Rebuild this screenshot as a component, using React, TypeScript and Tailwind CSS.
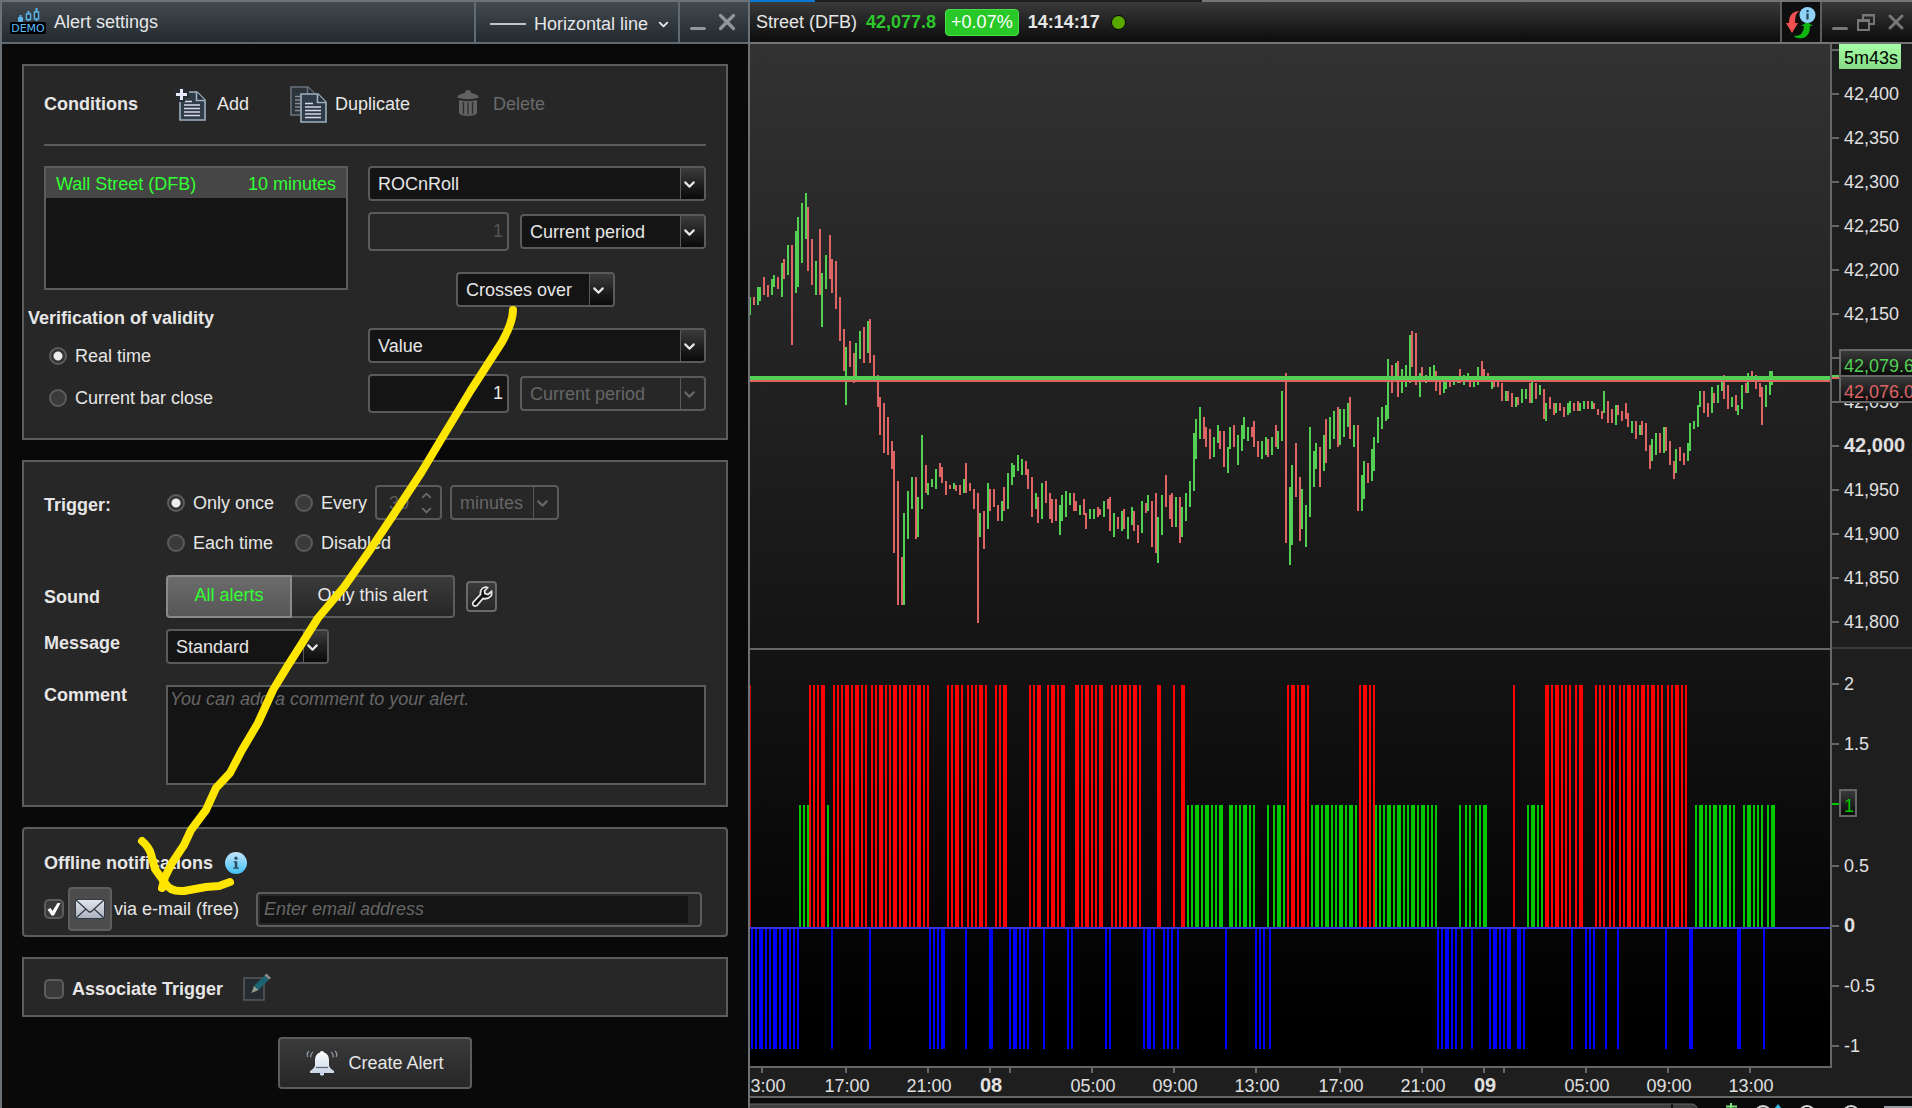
import type { ReactNode } from 'react';
import { ChevronDown, ChevronUp, X } from 'lucide-react';

// x, high, low, up (1) or down (0)
const candles = [
  [750, 297, 315, 1], [754, 297, 305, 0], [758, 287, 305, 1], [760, 287, 301, 1], [764, 277, 295, 0],
  [768, 285, 297, 0], [772, 279, 295, 1], [774, 275, 287, 1], [778, 277, 289, 0], [782, 263, 297, 1],
  [784, 259, 279, 0], [788, 245, 275, 1], [792, 245, 345, 0], [796, 231, 293, 1], [798, 217, 287, 1],
  [802, 203, 263, 1], [806, 193, 239, 1], [808, 207, 271, 0], [812, 239, 285, 0], [816, 261, 295, 1],
  [820, 229, 295, 0], [822, 273, 327, 1], [826, 255, 289, 1], [830, 235, 279, 0], [832, 259, 293, 0],
  [836, 261, 309, 0], [840, 297, 341, 0], [844, 329, 371, 0], [846, 347, 405, 1], [850, 341, 367, 0],
  [854, 353, 383, 0], [856, 343, 380, 1], [860, 331, 359, 1], [864, 327, 363, 0], [868, 321, 353, 1],
  [870, 319, 363, 0], [874, 355, 380, 0], [878, 375, 407, 0], [880, 397, 435, 0], [884, 403, 453, 0],
  [888, 417, 455, 0], [892, 441, 469, 0], [894, 451, 553, 0], [898, 481, 605, 0], [902, 557, 605, 0],
  [904, 513, 605, 1], [908, 491, 539, 1], [912, 477, 509, 1], [916, 477, 539, 0], [918, 497, 537, 1],
  [922, 435, 509, 1], [926, 465, 493, 0], [928, 483, 495, 1], [932, 479, 487, 1], [936, 469, 489, 1],
  [940, 463, 477, 0], [942, 467, 483, 0], [946, 481, 495, 0], [950, 485, 489, 0], [954, 483, 489, 1],
  [956, 485, 491, 0], [960, 485, 495, 0], [964, 479, 493, 1], [966, 463, 493, 0], [970, 483, 491, 0],
  [974, 489, 509, 0], [978, 493, 623, 0], [980, 513, 537, 1], [984, 511, 549, 0], [988, 483, 529, 1],
  [990, 489, 511, 0], [994, 489, 507, 0], [998, 505, 521, 0], [1002, 501, 521, 1], [1004, 487, 511, 0],
  [1008, 473, 509, 1], [1012, 463, 485, 1], [1014, 465, 477, 1], [1018, 455, 471, 1], [1022, 459, 475, 1],
  [1026, 461, 475, 0], [1028, 469, 489, 0], [1032, 477, 517, 0], [1036, 493, 509, 1], [1038, 497, 523, 0],
  [1042, 483, 519, 1], [1046, 481, 503, 0], [1050, 493, 519, 0], [1052, 499, 523, 0], [1056, 499, 521, 0],
  [1060, 505, 535, 1], [1062, 495, 521, 1], [1066, 491, 517, 1], [1070, 493, 505, 1], [1074, 493, 511, 0],
  [1076, 501, 511, 0], [1080, 505, 515, 1], [1084, 499, 515, 0], [1086, 513, 529, 0], [1090, 509, 519, 1],
  [1094, 509, 519, 1], [1098, 507, 517, 0], [1100, 509, 515, 0], [1104, 501, 517, 1], [1108, 499, 509, 0],
  [1110, 497, 531, 0], [1114, 513, 537, 1], [1118, 517, 529, 0], [1122, 511, 531, 1], [1124, 509, 529, 0],
  [1128, 517, 539, 1], [1132, 507, 525, 1], [1134, 511, 531, 0], [1138, 525, 543, 0], [1142, 501, 533, 1],
  [1146, 503, 513, 0], [1148, 495, 511, 1], [1152, 501, 547, 0], [1156, 493, 553, 0], [1158, 517, 563, 1],
  [1162, 495, 535, 1], [1166, 475, 507, 0], [1170, 495, 519, 0], [1172, 493, 527, 0], [1176, 497, 527, 1],
  [1180, 497, 543, 0], [1182, 507, 537, 1], [1186, 493, 521, 1], [1190, 481, 507, 1], [1194, 433, 491, 1],
  [1196, 419, 459, 1], [1200, 407, 439, 1], [1204, 417, 439, 0], [1206, 427, 447, 0], [1210, 429, 459, 0],
  [1214, 437, 457, 1], [1218, 425, 443, 1], [1220, 431, 449, 0], [1224, 431, 467, 0], [1228, 447, 473, 1],
  [1230, 427, 449, 1], [1234, 425, 447, 0], [1238, 435, 465, 1], [1242, 425, 451, 1], [1244, 417, 439, 1],
  [1248, 427, 441, 1], [1252, 427, 437, 0], [1254, 421, 447, 0], [1258, 441, 457, 0], [1262, 441, 459, 1],
  [1266, 437, 455, 1], [1268, 439, 457, 0], [1272, 437, 455, 1], [1276, 425, 447, 0], [1278, 431, 449, 1],
  [1282, 391, 441, 1], [1286, 373, 543, 0], [1290, 487, 565, 1], [1292, 465, 545, 1], [1296, 443, 497, 0],
  [1300, 477, 541, 0], [1302, 489, 529, 1], [1306, 505, 547, 1], [1310, 427, 517, 1], [1314, 451, 487, 1],
  [1316, 443, 469, 1], [1320, 447, 487, 0], [1324, 435, 471, 1], [1326, 419, 463, 0], [1330, 417, 449, 1],
  [1334, 411, 439, 1], [1338, 407, 447, 0], [1340, 409, 445, 1], [1344, 409, 437, 1], [1348, 403, 427, 1],
  [1350, 397, 439, 0], [1354, 425, 447, 1], [1358, 425, 511, 0], [1362, 475, 511, 1], [1364, 461, 499, 1],
  [1368, 463, 483, 0], [1372, 449, 481, 1], [1374, 437, 471, 1], [1378, 417, 443, 1], [1382, 407, 429, 1],
  [1386, 405, 421, 1], [1388, 359, 419, 1], [1392, 365, 393, 0], [1396, 363, 377, 1], [1398, 361, 397, 0],
  [1402, 369, 393, 1], [1406, 365, 387, 1], [1410, 335, 383, 1], [1412, 331, 367, 0], [1416, 333, 385, 0],
  [1420, 373, 397, 1], [1422, 367, 381, 0], [1426, 375, 383, 1], [1430, 367, 378, 1], [1434, 365, 378, 1],
  [1436, 371, 391, 0], [1440, 380, 395, 0], [1444, 381, 393, 1], [1446, 381, 389, 1], [1450, 381, 387, 0],
  [1454, 380, 385, 1], [1458, 380, 383, 1], [1460, 369, 383, 0], [1464, 375, 385, 1], [1468, 373, 378, 1],
  [1470, 380, 387, 0], [1474, 380, 387, 1], [1478, 367, 385, 1], [1482, 361, 378, 0], [1484, 369, 382, 0],
  [1488, 373, 382, 0], [1492, 380, 389, 1], [1494, 380, 387, 0], [1498, 380, 387, 0], [1502, 383, 401, 0],
  [1506, 391, 401, 1], [1508, 391, 401, 0], [1512, 393, 407, 0], [1516, 397, 407, 1], [1518, 397, 405, 0],
  [1522, 389, 403, 1], [1526, 389, 399, 1], [1530, 383, 403, 0], [1532, 381, 403, 1], [1536, 383, 399, 0],
  [1540, 385, 395, 1], [1544, 389, 419, 0], [1546, 403, 421, 1], [1550, 397, 409, 0], [1554, 403, 415, 0],
  [1556, 403, 413, 1], [1560, 403, 411, 0], [1564, 407, 417, 0], [1568, 403, 415, 1], [1570, 401, 413, 1],
  [1574, 403, 411, 0], [1578, 401, 411, 0], [1580, 403, 411, 1], [1584, 401, 409, 1], [1588, 401, 409, 0],
  [1592, 401, 409, 1], [1594, 403, 409, 0], [1598, 409, 415, 0], [1602, 411, 419, 0], [1604, 391, 413, 1],
  [1608, 401, 423, 0], [1612, 409, 423, 0], [1616, 405, 425, 1], [1618, 405, 415, 0], [1622, 411, 421, 0],
  [1626, 403, 419, 0], [1628, 413, 427, 0], [1632, 421, 433, 1], [1636, 421, 439, 0], [1640, 425, 435, 1],
  [1642, 421, 435, 0], [1646, 423, 451, 0], [1650, 445, 469, 0], [1652, 439, 461, 1], [1656, 433, 455, 1],
  [1660, 433, 453, 0], [1664, 427, 453, 1], [1666, 427, 451, 0], [1670, 441, 465, 0], [1674, 461, 479, 0],
  [1676, 449, 473, 1], [1680, 447, 461, 0], [1684, 453, 465, 0], [1688, 443, 461, 1], [1690, 423, 451, 1],
  [1694, 421, 429, 1], [1698, 405, 427, 1], [1700, 391, 407, 1], [1704, 391, 413, 0], [1708, 403, 417, 0],
  [1712, 387, 413, 1], [1714, 393, 403, 0], [1718, 385, 403, 1], [1722, 381, 391, 1], [1724, 375, 399, 0],
  [1728, 385, 409, 0], [1732, 397, 407, 1], [1736, 395, 411, 0], [1738, 405, 415, 1], [1742, 385, 409, 1],
  [1746, 383, 393, 0], [1748, 373, 393, 1], [1752, 371, 378, 0], [1756, 375, 389, 0], [1760, 383, 397, 0],
  [1762, 387, 425, 0], [1766, 385, 407, 1], [1770, 371, 395, 1], [1772, 371, 385, 1],
];

// indicator value from each x onwards
const signalRuns = [
  [752, -1], [800, 1], [810, 2], [828, 1], [832, -1], [834, 2], [870, -1], [872, 2], [930, -1], [948, 2],
  [966, -1], [968, 2], [990, -1], [996, 2], [1010, -1], [1030, 2], [1044, -1], [1048, 2], [1068, -1], [1076, 2],
  [1106, -1], [1112, 2], [1144, -1], [1158, 2], [1164, -1], [1174, 2], [1178, -1], [1182, 2], [1188, 1], [1226, -1],
  [1230, 1], [1256, -1], [1268, 1], [1270, -1], [1274, 1], [1288, 2], [1312, 1], [1360, 2], [1376, 1], [1438, -1],
  [1460, 1], [1462, -1], [1466, 1], [1472, -1], [1476, 1], [1490, -1], [1514, 2], [1518, -1], [1528, 1], [1546, 2],
  [1572, -1], [1576, 2], [1586, -1], [1596, 2], [1606, -1], [1610, 2], [1618, -1], [1620, 2], [1666, -1], [1668, 2],
  [1690, -1], [1696, 1], [1738, -1], [1744, 1], [1764, -1], [1768, 1],
];

const signalAt = (x: number) => {
  let value = 2;
  for (const [start, v] of signalRuns) {
    if (start <= x) value = v;
  }
  return value;
};

const signalBars = candles.map(([x]) => ({ x: x + 2, value: signalAt(x + 2) }));
const candlePath = (up: number) =>
  candles.filter((c) => c[3] === up).map(([x, high, low]) => `M${x} ${high}V${low}`).join('');
const signalPath = (value: number, y: number) =>
  signalBars.filter((b) => b.value === value).map((b) => `M${b.x} 928V${y}`).join('');

const priceTicks = [
  { y: 94, label: '42,400' },
  { y: 138, label: '42,350' },
  { y: 182, label: '42,300' },
  { y: 226, label: '42,250' },
  { y: 270, label: '42,200' },
  { y: 314, label: '42,150' },
  { y: 402, label: '42,050' },
  { y: 446, label: '42,000', bold: true },
  { y: 490, label: '41,950' },
  { y: 534, label: '41,900' },
  { y: 578, label: '41,850' },
  { y: 622, label: '41,800' },
  { y: 684, label: '2' },
  { y: 744, label: '1.5' },
  { y: 866, label: '0.5' },
  { y: 926, label: '0', bold: true },
  { y: 986, label: '-0.5' },
  { y: 1046, label: '-1' },
];

const timeTicks = [
  { x: 762, label: '13:00' },
  { x: 846, label: '17:00' },
  { x: 928, label: '21:00' },
  { x: 990, label: '08', bold: true },
  { x: 1010, label: '' },
  { x: 1092, label: '05:00' },
  { x: 1174, label: '09:00' },
  { x: 1256, label: '13:00' },
  { x: 1340, label: '17:00' },
  { x: 1422, label: '21:00' },
  { x: 1484, label: '09', bold: true },
  { x: 1504, label: '' },
  { x: 1586, label: '05:00' },
  { x: 1668, label: '09:00' },
  { x: 1750, label: '13:00' },
];

function Select({ label, value, className, disabled }: { label: string; value: string; className: string; disabled?: boolean }) {
  return (
    <div
      className={`relative h-[35px] overflow-hidden rounded border-2 border-[#5a5a5a] ${disabled ? 'bg-[#272727] text-[#666]' : 'bg-[#141414] text-[#e6e6e6]'} ${className}`}
    >
      <select aria-label={label} disabled={disabled} className="h-full w-full appearance-none bg-transparent pl-2 pr-7 opacity-100 outline-none">
        <option>{value}</option>
      </select>
      <span
        className={`pointer-events-none absolute inset-y-0 right-0 flex w-6 items-center border-l border-[#5a5a5a] pt-0.5 ${disabled ? '' : 'bg-gradient-to-b from-[#3c3c3c] to-[#0a0a0a]'}`}
      >
        <ChevronDown size={17} strokeWidth={3} />
      </span>
    </div>
  );
}

function Radio({ name, label, checked }: { name: string; label: string; checked?: boolean }) {
  return (
    <label className="flex h-5 items-center gap-2 whitespace-nowrap pl-px">
      <input
        type="radio"
        name={name}
        defaultChecked={checked}
        className="h-[18px] w-[18px] appearance-none rounded-full border-2 border-[#5c5c5c] bg-[#3a3a3a] checked:bg-[radial-gradient(circle,#ececec_4px,#333_5px)]"
      />
      {label}
    </label>
  );
}

function Checkbox({ id, checked, label }: { id: string; checked?: boolean; label: string }) {
  return (
    <span className="relative flex h-5 w-5 shrink-0">
      <input
        id={id}
        type="checkbox"
        aria-label={label}
        defaultChecked={checked}
        className="h-5 w-5 appearance-none rounded-[5px] border-2 border-[#5c5c5c] bg-[#3a3a3a]"
      />
      {checked && (
        <svg className="pointer-events-none absolute inset-0" width="20" height="20" viewBox="0 0 20 20">
          <path d="M3.500 10.500l3-1.500 2 3L13.500 4h3L10 16.500H7.500z" fill="#fff" />
        </svg>
      )}
    </span>
  );
}

function Card({ className, children }: { className: string; children: ReactNode }) {
  return <section className={`border-2 border-[#5c5c5c] bg-[#272727] px-5 ${className}`}>{children}</section>;
}

function Page({ x, y, dim }: { x: number; y: number; dim?: boolean }) {
  return (
    <g transform={`translate(${x} ${y})`} opacity={dim ? 0.55 : 1}>
      <path d="M1 1H18L26 9V29H1z" fill="#2f3c48" stroke="#9fb0c0" strokeWidth="1.600" />
      <path d="M17.500 1V9.500H26" fill="#25303a" stroke="#9fb0c0" strokeWidth="1.600" />
      <path d="M5 10.500h8M5 14h16M5 17.500h16M5 21h16M5 24.500h16" stroke="#d6d6ea" strokeWidth="1.700" />
    </g>
  );
}

function InfoIcon() {
  return (
    <svg width="22" height="22" viewBox="0 0 22 22">
      <defs>
        <linearGradient id="info" x1="0" y1="0" x2="0" y2="1">
          <stop offset="0" stopColor="#c3e6fb" />
          <stop offset="1" stopColor="#3fc0f4" />
        </linearGradient>
      </defs>
      <circle cx="11" cy="11" r="11" fill="url(#info)" />
      <circle cx="11" cy="6.200" r="1.600" fill="#2c4a5e" />
      <path d="M8.500 9.200h3.800v6.300h1.500v1.300H8.300v-1.300h1.500v-5H8.500z" fill="#2c4a5e" />
    </svg>
  );
}

function AlertPanel() {
  return (
    <div className="relative flex min-w-0 flex-col border-x-2 border-t-2 border-[#6c7176] bg-[#090909]">
      <header className="flex h-[42px] border-b-2 border-[#5f6a73] bg-gradient-to-b from-[#424a50] to-[#232a30]">
        <div className="flex flex-1 items-center gap-2 pl-2">
          <svg width="36" height="28" viewBox="0 0 36 28">
            <rect x="0" y="14" width="36" height="12" rx="2" fill="#000" />
            <g stroke="#5ab4ea" fill="none">
              <path d="M10.500 7v3M18.500 3v4M18.500 11v2M26.500 0v4M26.500 11v2" strokeWidth="2" />
              <path d="M8.500 9.500h4v4h-4z" fill="#5ab4ea" strokeWidth="1" />
              <rect x="16.500" y="6" width="4" height="5.500" fill="#222" strokeWidth="1.500" />
              <rect x="24.500" y="4" width="4" height="7" fill="#222" strokeWidth="1.500" />
            </g>
            <text x="18" y="24" textAnchor="middle" fontFamily="DejaVu Sans" fontSize="11" fill="#5cbcf5">DEMO</text>
          </svg>
          <h1>Alert settings</h1>
        </div>
        <button className="flex w-[204px] items-center gap-2 border-l-2 border-[#5f6a73] pl-3.5 pt-1">
          <span className="h-0.5 w-9 bg-[#c4c4c4]" />
          Horizontal line
          <ChevronDown size={15} strokeWidth={3} />
        </button>
        <div className="flex w-[70px] items-center justify-between border-l-2 border-[#5f6a73] pl-2.5 pr-2 text-[#8f969c]">
          <button aria-label="Minimize" className="flex h-full items-center pt-3">
            <span className="h-[3px] w-4 rounded bg-[#8f969c]" />
          </button>
          <button aria-label="Close">
            <X size={26} strokeWidth={3} />
          </button>
        </div>
      </header>

      <div className="flex flex-col gap-5 p-5">
        <Card className="pb-[25px]">
          <div className="flex h-20 items-center border-b-2 border-[#5c5c5c]">
            <h2 className="w-[130px] pb-0.5 font-bold">Conditions</h2>
            <button className="flex w-[116px] items-center gap-2.5">
              <svg width="33" height="34" viewBox="0 0 33 34">
                <Page x={5} y={3} />
                <path d="M5 0h5v4h4v5h-4v4H5V9H1V4h4z" fill="#e8e8f8" stroke="#272b33" strokeWidth="2" />
              </svg>
              <span className="pb-0.5">Add</span>
            </button>
            <button className="flex w-[163px] items-center gap-2">
              <svg width="37" height="38" viewBox="0 0 37 38">
                <Page x={0} y={0} dim />
                <Page x={10} y={7} />
              </svg>
              <span className="pb-0.5">Duplicate</span>
            </button>
            <button disabled className="flex items-center gap-3.5 pl-1 text-[#6a6a6a]">
              <svg className="mb-1" width="22" height="26" viewBox="0 0 22 26" fill="#626262">
                <path d="M8 3Q8 0 11 0t3 3Q21 4 22 7.500Q11 11 0 7.500Q1 4 8 3z" />
                <path d="M2 10Q11 12.500 20 10V23Q18 26 11 26T2 23z" />
                <path d="M6.500 12v12M11 12.500v12M15.500 12v12" stroke="#2b2b2b" strokeWidth="1.300" />
              </svg>
              <span className="pb-0.5">Delete</span>
            </button>
          </div>
          <div className="grid grid-cols-[304fr_338fr] gap-5 pt-5">
            <div>
              <ul className="h-[124px] border-2 border-[#5c5c5c] bg-[#141414]">
                <li className="flex h-[30px] items-center justify-between bg-[#464646] px-2.5 pt-0.5 text-[#32ff32]">
                  <span>Wall Street (DFB)</span>
                  <span>10 minutes</span>
                </li>
              </ul>
              <fieldset>
                <legend className="-ml-4 pt-[18px] font-bold leading-5">Verification of validity</legend>
                <div className="flex flex-col gap-[22px] pl-1 pt-[18px]">
                  <Radio name="validity" label="Real time" checked />
                  <Radio name="validity" label="Current bar close" />
                </div>
              </fieldset>
            </div>
            <div className="flex flex-col gap-[21px]">
              <div className="flex flex-col gap-[11px]">
                <Select label="Indicator" value="ROCnRoll" className="w-full" />
                <div className="flex items-center gap-[11px]">
                  <input aria-label="Offset" disabled defaultValue="1" className="h-[39px] w-[141px] rounded border-2 border-[#5a5a5a] px-1 text-right text-[#555]" />
                  <Select label="Period" value="Current period" className="flex-1" />
                </div>
              </div>
              <Select label="Operator" value="Crosses over" className="ml-[88px] w-[159px]" />
              <div className="flex flex-col gap-[11px]">
                <Select label="Compared to" value="Value" className="w-full" />
                <div className="flex items-center gap-[11px]">
                  <input aria-label="Value" defaultValue="1" className="h-[39px] w-[141px] rounded border-2 border-[#5a5a5a] bg-[#141414] px-1 text-right" />
                  <Select label="Value period" value="Current period" className="flex-1" disabled />
                </div>
              </div>
            </div>
          </div>
        </Card>

        <Card className="grid grid-cols-[122px_1fr] pb-5 pt-[23px] leading-5">
          <h2 className="pt-2.5 font-bold">Trigger:</h2>
          <div className="grid grid-cols-[128px_1fr] gap-y-[13px] pb-[22px]">
            <div className="flex items-center">
              <Radio name="trigger" label="Only once" checked />
            </div>
            <div className="flex items-center gap-2">
              <Radio name="trigger" label="Every" />
              <div className="flex h-[35px] w-[67px] items-center justify-between rounded border-2 border-[#5a5a5a] pl-3 pr-1.5 text-[#6a6a6a]">
                <input aria-label="Interval" disabled defaultValue="30" className="w-6 text-[#5c5c5c]" />
                <span className="flex flex-col">
                  <ChevronUp size={15} strokeWidth={3} />
                  <ChevronDown size={15} strokeWidth={3} />
                </span>
              </div>
              <Select label="Interval unit" value="minutes" className="w-[109px]" disabled />
            </div>
            <Radio name="trigger" label="Each time" />
            <Radio name="trigger" label="Disabled" />
          </div>

          <h2 className="pt-3 font-bold">Sound</h2>
          <div className="flex items-center gap-[11px] pb-[11px]">
            <div className="flex h-[43px]">
              <button className="w-[126px] rounded-l border-2 border-[#8a8a8a] bg-gradient-to-b from-[#6b6b6b] to-[#575757] pb-1 text-[#32ff32]">
                All alerts
              </button>
              <button className="w-[163px] rounded-r border-2 border-l-0 border-[#5c5c5c] bg-gradient-to-b from-[#3a3a3a] to-[#272727] pb-1">
                Only this alert
              </button>
            </div>
            <button aria-label="Sound settings" className="flex h-[31px] w-[31px] items-center justify-center rounded border-2 border-[#6a6a6a] bg-gradient-to-b from-[#3a3a3a] to-[#272727]">
              <svg width="22" height="22" viewBox="0 0 22 22">
                <path
                  d="M13 1.500Q9 3 9.500 8.500L2 16.500Q1 19.500 4 20L6 19.500L12 12.500Q17 13.500 20 10Q21 8 20.500 5.500L17 8.500L14 7.500L13.500 5L16.500 1.500Q15 .8 13 1.500z"
                  fill="#111"
                  stroke="#e6e6e6"
                  strokeWidth="1.800"
                />
              </svg>
            </button>
          </div>

          <h2 className="pt-1 font-bold">Message</h2>
          <Select label="Message" value="Standard" className="mb-[21px] w-[163px]" />

          <label htmlFor="comment" className="font-bold">Comment</label>
          <textarea
            id="comment"
            placeholder="You can add a comment to your alert."
            className="block h-[100px] w-full resize-none border-2 border-[#5c5c5c] bg-[#141414] px-0.5 py-0.5 placeholder:italic placeholder:text-[#666]"
          />
        </Card>

        <Card className="rounded pb-1 pt-[22px]">
          <div className="mb-3 flex h-6 items-center gap-3">
            <h2 className="font-bold">Offline notifications</h2>
            <InfoIcon />
          </div>
          <div className="flex h-11 items-center">
            <Checkbox id="by-mail" label="via e-mail" checked />
            <button aria-label="E-mail settings" className="ml-1 flex h-11 w-11 items-center justify-center rounded border-2 border-[#5e5e5e] bg-[#4c4c4c]">
              <svg width="30" height="20" viewBox="0 0 30 20">
                <defs>
                  <linearGradient id="mail" x1="0" y1="0" x2="0" y2="1">
                    <stop offset="0" stopColor="#e4e8ee" />
                    <stop offset="1" stopColor="#a9b1bd" />
                  </linearGradient>
                </defs>
                <rect x=".5" y=".5" width="29" height="19" rx="1.500" fill="url(#mail)" stroke="#2f3a46" />
                <path d="M1 1L13 12Q15 14 17 12L29 1M1 19L11 10M29 19L19 10" fill="none" stroke="#2f3a46" strokeWidth="1.200" />
              </svg>
            </button>
            <label htmlFor="email" className="ml-0.5 w-[142px] whitespace-nowrap">via e-mail (free)</label>
            <div className="mr-1 h-[35px] flex-1 rounded border-2 border-[#5c5c5c] py-0.5 pl-0.5 pr-3">
              <input
                id="email"
                type="email"
                placeholder="Enter email address"
                className="h-full w-full bg-[#141414] px-1 placeholder:italic placeholder:text-[#666]"
              />
            </div>
          </div>
        </Card>

        <Card className="flex h-[60px] items-center pt-1">
          <Checkbox id="associate" label="Associate Trigger" />
          <label htmlFor="associate" className="ml-2 font-bold">Associate Trigger</label>
          <button aria-label="Edit trigger" className="ml-5 pb-1">
            <svg width="28" height="28" viewBox="0 0 28 28">
              <path d="M1 5h20v22H1z" fill="#242c31" stroke="#55595c" strokeWidth="1.500" />
              <path d="M11 13L21.500 2.500L26 6.500L15.500 17z" fill="#1c6472" />
              <path d="M21.500 2.500L23.500 .5L28 5L26 6.500z" fill="#8a8a8a" />
              <path d="M11 13L15.500 17L8.500 20z" fill="#9b9b8d" />
            </svg>
          </button>
        </Card>

        <button className="mx-auto flex h-[52px] w-[194px] items-center justify-center gap-2.5 rounded border-2 border-[#5c5c5c] bg-gradient-to-b from-[#3a3a3a] to-[#272727]">
          <svg width="32" height="26" viewBox="0 0 32 26">
            <defs>
              <linearGradient id="bell" x1="0" y1="0" x2="0" y2="1">
                <stop offset="0" stopColor="#fff" />
                <stop offset="1" stopColor="#c9d6e6" />
              </linearGradient>
            </defs>
            <path d="M16 1q2 0 2 1.500Q23 4 23 10v5q0 3 5 6v2H4v-2q5-3 5-6v-5Q9 4 14 2.500Q14 1 16 1z" fill="url(#bell)" />
            <path d="M14 23h4v1.500q-2 2.500-4 0z" fill="#c9d6e6" />
            <path d="M10 17.500h12" stroke="#5a6573" strokeWidth="1.200" />
            <path d="M3 1Q0 4 2 7M7 2Q4 4 5 7.500M29 1Q32 4 30 7M25 2Q28 4 27 7.500" fill="none" stroke="#8c96a2" strokeWidth="1.300" />
          </svg>
          Create Alert
        </button>
      </div>

      {/* hand-drawn pointer from the operator to the e-mail option */}
      <svg className="pointer-events-none absolute -left-0.5 -top-0.5" width="750" height="1000" viewBox="0 0 750 1000" fill="none" stroke="#ffe600" strokeWidth="8" strokeLinecap="round" strokeLinejoin="round">
        <path d="M513 310Q513 322 502 342L471 390L445 433L421 473L392 517L368 553L344 587L318 618L306 637L287 667L273 690L258 723L242 750L230 773L216 788L206 810L191 830L184 845L172 863L165 877L162 888" />
        <path d="M142 841Q149 847 151 854L155 869L165 883Q170 892 184 891L206 887L219 886L230 882" />
      </svg>
    </div>
  );
}

function Chart() {
  return (
    <svg
      viewBox="750 44 1162 1064"
      className="block w-full"
      role="img"
      aria-label="Street (DFB) price chart"
      fontFamily="Liberation Sans, sans-serif"
      fontSize="18"
      fill="#e0e0e0"
    >
      <defs>
        <linearGradient id="price-bg" x1="0" y1="0" x2="0" y2="1">
          <stop offset="0" stopColor="#323232" />
          <stop offset="1" stopColor="#141414" />
        </linearGradient>
        <linearGradient id="signal-bg" x1="0" y1="0" x2="0" y2="1">
          <stop offset="0" stopColor="#141414" />
          <stop offset=".9" stopColor="#000" />
        </linearGradient>
        <linearGradient id="tag-bg" x1="0" y1="0" x2="0" y2="1">
          <stop offset="0" stopColor="#3c3c3c" />
          <stop offset="1" stopColor="#080808" />
        </linearGradient>
        <linearGradient id="timer-bg" x1="0" y1="0" x2="0" y2="1">
          <stop offset="0" stopColor="#a6ffa6" />
          <stop offset="1" stopColor="#86dc86" />
        </linearGradient>
      </defs>
      <rect x="750" y="44" width="1162" height="1064" fill="#1e1e1e" />
      <rect x="750" y="44" width="1080" height="604" fill="url(#price-bg)" />
      <rect x="750" y="650" width="1080" height="416" fill="url(#signal-bg)" />

      <g strokeWidth="2" shapeRendering="crispEdges">
        <path d={candlePath(1)} stroke="#53d053" />
        <path d={candlePath(0)} stroke="#de6565" />
        <path d={signalPath(2, 685)} stroke="#f00" />
        <path d={signalPath(1, 805)} stroke="#00c800" />
        <path d={signalPath(-1, 1049)} stroke="#00f" />
        <path d="M750.500 928V685" stroke="#c00000" strokeWidth="1" />
        <path d="M750 928H1830" stroke="#3232e6" />
        <path d="M750 378H1830" stroke="#53d053" strokeWidth="4" />
        <path d="M750 381H1830M1832 378H1839" stroke="#de6565" />
        <path d="M1832 376H1839" stroke="#53d053" />
        <path d="M750 649H1830M1831 44V1067M750 1067H1832M750 1097H1912M1832 50H1839M1832 358H1839" stroke="#666" />
        <path d="M1832 648H1912" stroke="#3a3a3a" />
        <path d="M1832 804H1839" stroke="#00c800" />
        {priceTicks.map((t) => (
          <path key={t.y} d={`M1832 ${t.y}H1839`} stroke="#666" />
        ))}
        {timeTicks.map((t) => (
          <path key={t.x} d={`M${t.x} 1068V1073`} stroke="#666" />
        ))}
      </g>

      {priceTicks.map((t) => (
        <text key={t.y} x="1844" y={t.y + 6} fontSize={t.bold ? 20 : 18} fontWeight={t.bold ? 700 : 400}>
          {t.label}
        </text>
      ))}
      {timeTicks.map((t) => (
        <text key={t.x} x={t.x + 1} y="1092" textAnchor="middle" fontSize={t.bold ? 20 : 18} fontWeight={t.bold ? 700 : 400}>
          {t.label}
        </text>
      ))}

      <rect x="1839" y="44" width="62" height="25" fill="url(#timer-bg)" />
      <text x="1844" y="64" fill="#000">5m43s</text>
      <rect x="1840" y="350" width="80" height="26" fill="url(#tag-bg)" stroke="#666" strokeWidth="2" />
      <text x="1844" y="372" fill="#53d053">42,079.6</text>
      <rect x="1840" y="376" width="80" height="26" fill="url(#tag-bg)" stroke="#666" strokeWidth="2" />
      <text x="1844" y="398" fill="#de6565">42,076.0</text>
      <rect x="1840" y="790" width="16" height="26" fill="url(#tag-bg)" stroke="#666" strokeWidth="2" />
      <text x="1844" y="812" fill="#00c800">1</text>

      {/* scroll bar and the tops of the zoom tools */}
      <rect x="750" y="1098" width="1162" height="10" fill="#090909" />
      <rect x="740" y="1104" width="957" height="14" rx="5" fill="#3e3e3e" stroke="#666" />
      <path d="M1672 1104V1108" stroke="#111" strokeWidth="2" />
      <path d="M1731 1103V1108M1726 1106.500H1737" stroke="#7ee87e" strokeWidth="2" />
      <g fill="#555" stroke="#d8d8d8" strokeWidth="2">
        <circle cx="1763" cy="1114" r="8" />
        <circle cx="1807" cy="1114" r="8" fill="none" />
        <circle cx="1851" cy="1114" r="8" fill="none" />
      </g>
      <path d="M1778 1104L1782 1109H1774z" fill="#35b5ea" />
      <rect x="1884" y="1106" width="30" height="6" fill="#999da3" />
    </svg>
  );
}

function ChartPanel() {
  return (
    <div className="min-w-0">
      <div className="flex h-0.5">
        <span className="w-[65px] bg-[#0a78d6]" />
        <span className="w-1/3 bg-[#1e1e1e]" />
        <span className="flex-1 bg-[#757575]" />
      </div>
      <header className="flex h-[42px] items-center border-b-2 border-[#757575] bg-gradient-to-b from-[#3a3a3a] to-[#0c0c0c]">
        <div className="flex flex-1 items-center gap-[9px] whitespace-nowrap pl-1.5">
          <span>Street (DFB)</span>
          <span className="font-bold text-[#2cc82c]">42,077.8</span>
          <span className="flex h-[27px] items-center rounded border border-[#48e048] bg-[#28c828] px-[5px] text-white">+0.07%</span>
          <span className="font-bold">14:14:17</span>
          <span className="ml-0.5 h-[15px] w-[15px] rounded-full border border-black bg-[#58a800]" />
        </div>
        <button aria-label="Trade" className="flex h-full w-[42px] items-center justify-center border-x-2 border-[#5c5c5c] bg-[#0e0e0e]">
          <svg width="34" height="36" viewBox="0 0 34 36">
            <path d="M16 7Q11 8 11 19h3L8 29L2 19h3Q5 7 16 7z" fill="#f25050" />
            <path d="M20 22h-3l6-4 6 4h-3Q26 32 19 34Q12 35 10 32Q20 32 20 22z" fill="#10b610" />
            <circle cx="23.500" cy="11" r="8" fill="#8fd2f7" />
            <path d="M23.500 6v2.200M23.500 9.500v6" stroke="#23435a" strokeWidth="2.200" />
          </svg>
        </button>
        <div className="flex w-[90px] items-center justify-between pl-2.5 pr-2 text-[#777]">
          <button aria-label="Minimize chart" className="flex h-8 items-center pt-3">
            <span className="h-[3px] w-4 rounded bg-[#777]" />
          </button>
          <button aria-label="Restore chart">
            <svg width="18" height="18" viewBox="0 0 18 18" fill="none" stroke="#777" strokeWidth="2">
              <path d="M6 6V2H17V11H12M6 2.500H17" />
              <path d="M1 7H12V17H1zM1 8H12" />
            </svg>
          </button>
          <button aria-label="Close chart" className="-mr-1">
            <X size={24} strokeWidth={3} />
          </button>
        </div>
      </header>
      <Chart />
    </div>
  );
}

export default function App() {
  return (
    <main className="grid min-h-screen grid-cols-[minmax(0,750fr)_minmax(0,1162fr)] overflow-hidden bg-[#090909] font-['Liberation_Sans',Arial,sans-serif] text-[18px] leading-6 text-[#e6e6e6]">
      <AlertPanel />
      <ChartPanel />
    </main>
  );
}
